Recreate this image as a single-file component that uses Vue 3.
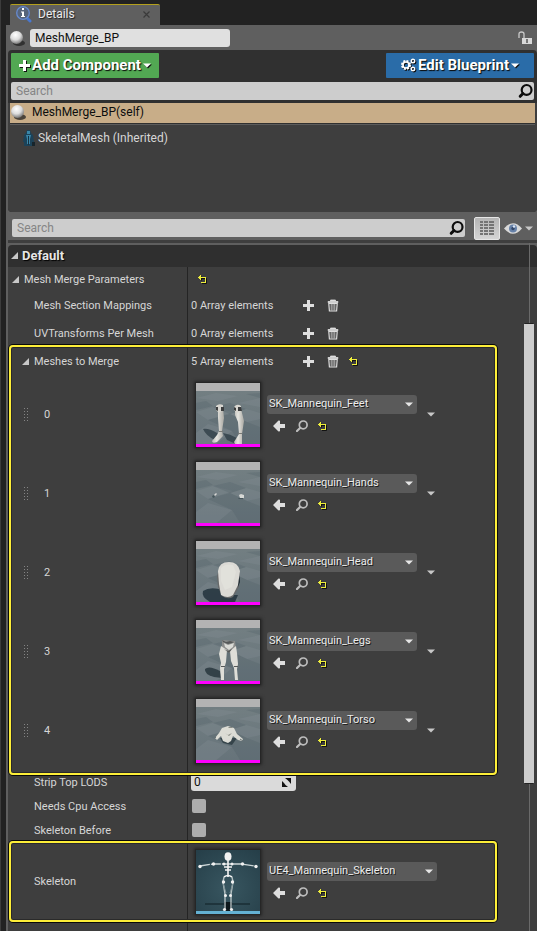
<script setup>
import { ref } from 'vue'

const meshes = ref([
  { kind: 'feet', name: 'SK_Mannequin_Feet' },
  { kind: 'hands', name: 'SK_Mannequin_Hands' },
  { kind: 'head', name: 'SK_Mannequin_Head' },
  { kind: 'legs', name: 'SK_Mannequin_Legs' },
  { kind: 'torso', name: 'SK_Mannequin_Torso' }
])
const arrays = ['Mesh Section Mappings', 'UVTransforms Per Mesh']
const flags = [
  { id: 'cpu', label: 'Needs Cpu Access' },
  { id: 'before', label: 'Skeleton Before' }
]
const blueprintName = ref('MeshMerge_BP')
const stripLods = ref('0')
const dots = [0, 3, 6, 9, 12]
</script>

<template>
  <svg class="defs" width="0" height="0" aria-hidden="true">
    <defs>
      <radialGradient id="ball" cx=".42" cy=".3" r=".7">
        <stop offset="0" stop-color="#fff" />
        <stop offset=".55" stop-color="#dcdcdc" />
        <stop offset="1" stop-color="#777" />
      </radialGradient>
      <linearGradient id="floor" x1="0" y1="0" x2="0" y2="1">
        <stop offset="0" stop-color="#748083" />
        <stop offset="1" stop-color="#66737a" />
      </linearGradient>
      <linearGradient id="skin" x1="0" y1="0" x2="1" y2="0">
        <stop offset="0" stop-color="#b9b8b3" />
        <stop offset=".4" stop-color="#e6e5e0" />
        <stop offset="1" stop-color="#aaa9a3" />
      </linearGradient>
      <radialGradient id="teal" cx=".5" cy=".6" r=".75">
        <stop offset="0" stop-color="#385660" />
        <stop offset="1" stop-color="#263f49" />
      </radialGradient>
    </defs>
    <symbol id="i-ball" viewBox="0 0 16 16">
      <ellipse cx="10" cy="13" rx="6" ry="3" fill="#222" opacity=".75" />
      <circle cx="7.5" cy="7.5" r="6.5" fill="url(#ball)" />
    </symbol>
    <symbol id="i-plus" viewBox="0 0 11 11">
      <path d="M4 0h3v4h4v3H7v4H4V7H0V4h4z" fill="#dedede" />
    </symbol>
    <symbol id="i-trash" viewBox="0 0 12 13">
      <path d="M3.5 2V1h5v1M1 2.5h10v1H1z" fill="#dedede" stroke="#dedede" stroke-width=".8" />
      <path d="M1.8 4.5h8.4L9.6 12H2.4z" fill="none" stroke="#dedede" stroke-width="1.2" />
      <path d="M4.2 5v6.5M6 5v6.5M7.8 5v6.5" stroke="#d0d0d0" stroke-width=".9" />
    </symbol>
    <symbol id="i-reset" viewBox="0 0 9 9">
      <path d="M3.5 1.500v4M1 3.500h7.500v5H4" fill="none" stroke="#111" />
      <path d="M2 0h1v2h5v6H3V7h4V3H3v2H2V4H1V3H0V2h1V1h1z" fill="#eeee3c" shape-rendering="crispEdges" />
    </symbol>
    <symbol id="i-back" viewBox="0 0 13 12">
      <path d="M0 6 5.5.5 7 .8V4h5v4H7v3.2l-1.5.3z" fill="#dedede" />
    </symbol>
    <symbol id="i-find" viewBox="0 0 12 12">
      <circle cx="7.2" cy="4.9" r="3.9" fill="none" stroke="#bdbdbd" stroke-width="1.7" />
      <path d="M4.3 7.8 1 11" stroke="#bdbdbd" stroke-width="2.2" stroke-linecap="round" />
    </symbol>
    <symbol id="i-search" viewBox="0 0 16 16">
      <circle cx="8.600" cy="6.900" r="4.900" fill="none" stroke="#0c0c0c" stroke-width="2.200" />
      <path d="M5 10.500 2.200 13.300" stroke="#0c0c0c" stroke-width="3" stroke-linecap="round" />
    </symbol>
    <symbol id="i-caret" viewBox="0 0 8 5"><path d="M0 .5h8L4 4.5z" fill="currentColor" /></symbol>
    <symbol id="i-open" viewBox="0 0 7 7"><path d="M7 0v7H0z" fill="#c8c8c8" /></symbol>
    <symbol id="i-grip" viewBox="0 0 5 14">
      <g v-for="y in dots" :key="y" fill="#858585">
        <rect x="0" :y="y" width="1" height="1" /><rect x="3" :y="y" width="1" height="1" />
      </g>
    </symbol>
    <symbol id="i-scene" viewBox="0 0 64 64">
      <rect width="64" height="64" fill="url(#floor)" />
      <g fill="#849095" opacity=".3">
        <path d="M0 15 20 10 42 13 22 18zM42 20 64 15v9zM0 29 17 24 37 29 12 37zM34 31 50 26 64 30v6L51 39zM12 41 36 48 17 64H0V50z" />
      </g>
      <g fill="#4b5b62" opacity=".25">
        <path d="M17 24 34 20 50 26 34 31zM12 37 34 31 51 39 36 48zM36 48 51 39 64 44v20H46zM0 20l10-2 7 5-17 4zM50 11l14-1v5z" />
      </g>
      <rect width="64" height="8" fill="#b3b3b3" />
    </symbol>
    <symbol id="i-feet" viewBox="0 0 64 64">
      <path d="M7 46q6-1 16 5l1 4-5 2q-9-4-12-11zM27 50q7 1 14 5l-1 6-9-4z" fill="#2c3b43" opacity=".75" />
      <path d="M22 25h5l1 10-2 13 1 5-6 6q-5 2-5-1l5-6 2-4-1-13z" fill="url(#skin)" />
      <path d="M39 26h6l3 12-2 13v10h-7l-1-2 5-8-1-12-3-7z" fill="url(#skin)" />
      <path d="M20 23q3-3 7-1v5l-4 3-3-3zM38 24q3-4 7-1v5l-4 2-3-3z" fill="#d8d6d0" />
      <path d="M20 24h2v4l-2-1zM25 24h3v4h-3zM38 24l2 1v3l-2-1zM42 24h3l1 4h-4z" fill="#3b3d3e" />
      <path d="M23 48h4v1h-4zM42 50h4v1h-4z" fill="#777975" />
    </symbol>
    <symbol id="i-hands" viewBox="0 0 64 64">
      <path d="m18 33 2-2 1 1-2 2zM43 33l2-1 3 1v3h-4z" fill="#d7d8d5" />
      <path d="m16 34 2-1 1 2-2 1zM43 36h4v1h-5z" fill="#45545a" />
    </symbol>
    <symbol id="i-head" viewBox="0 0 64 64">
      <path d="M7 50q7-5 20-1l4 12H14Q5 56 7 50zM27 54h15l-3 7H27z" fill="#22333d" opacity=".85" />
      <path d="M21 36q2-13 12-14 10 0 11 10l-1 14-6 10q-5 3-11-1l-4-9z" fill="#67696a" />
      <path d="M41 31q3 3 3 10l-2 5z" fill="#222d34" />
      <path d="M22 30q1-9 11-9 9 0 11 9l-2 14-5 10q-5 4-12 0l-2-11z" fill="#dbdad5" />
      <path d="M25 27q4-5 12-3l3 7-4 15-7 3-4-9z" fill="#e8e7e2" opacity=".5" />
    </symbol>
    <symbol id="i-legs" viewBox="0 0 64 64">
      <path d="M9 49q4-4 15 2l2 7-8-1q-10-3-9-8z" fill="#243239" opacity=".8" />
      <path d="m26 20 13 1 1 8-7 4-7-4z" fill="#8d8e8c" />
      <path d="m25 26 6 4-1 12-2 7v11h-3l-1-12 1-5-2-9zM40 26l-6 5 1 10 3 7 1 12h3l-1-11 1-5-1-11z" fill="#dfded8" />
      <path d="m28 23 4 2 6-2-1 4-4 3-4-3z" fill="#dadbd6" />
      <path d="m26 20 4 2 4-1 4 1-2 1-4 1-5-2zM28 29l4 2 4-2-3 4zM25 46h4v1h-4zM38 46h4v1h-4z" fill="#555858" />
    </symbol>
    <symbol id="i-torso" viewBox="0 0 64 64">
      <path d="M24 39h17l-5 7-9-2z" fill="#2b3a40" opacity=".8" />
      <path d="m26 29 6-2 6 2 3 6 6 5-1 2-4-1-5-4-2 5-3 2-5-2-2-5-4 4-2-2 4-5z" fill="#dcdcd5" />
      <path d="M32 28h4l1 1-4 0zM29 34l3 2 4-2-3 3z" fill="#888b84" />
      <path d="m20 38-2 2M44 40l3 2" stroke="#6a7375" />
    </symbol>
    <symbol id="i-skeleton" viewBox="0 0 64 64">
      <rect width="64" height="64" fill="url(#teal)" />
      <path d="M9 54h45" stroke="#1b2f36" stroke-width="2" opacity=".8" />
      <path d="M28 52h8v9h-8z" fill="#0d171b" />
      <path d="M4 16 17 14h11l4 0 4 0h10l13 2" fill="none" stroke="#cdd6d7" stroke-width="1.300" stroke-dasharray="10 1" />
      <path d="M32 10v17M28 17h8M29 20h6M28 27q4-3 8 0" fill="none" stroke="#f4f4f4" stroke-width="1.600" />
      <path d="m28 27-1 5 2 12v15M36 27l1 5-2 12v15" fill="none" stroke="#b4c1c2" stroke-width="1.400" />
      <path d="m27 33 3 10M37 33l-3 10" stroke="#7f9297" />
      <g fill="#f1f1f1">
        <ellipse cx="32" cy="6.500" rx="3.500" ry="4.300" />
        <circle cx="4" cy="16.500" r="1.700" /><circle cx="60" cy="16.500" r="1.700" />
        <circle cx="17.500" cy="14" r="1.700" /><circle cx="46.500" cy="14" r="1.700" />
        <circle cx="28" cy="14" r="1.500" /><circle cx="36" cy="14" r="1.500" />
        <circle cx="27.500" cy="32" r="1.700" /><circle cx="36.500" cy="32" r="1.700" />
        <circle cx="29.500" cy="45.500" r="1.500" /><circle cx="34.500" cy="45.500" r="1.500" />
        <circle cx="28.500" cy="59.500" r="1.600" /><circle cx="35.500" cy="59.500" r="1.600" />
      </g>
    </symbol>
  </svg>

  <div class="window">
    <div class="tabs">
      <div class="tab">
        <svg width="18" height="18" viewBox="0 0 18 18" aria-hidden="true">
          <path d="m11 12 4 4" stroke="#4978d0" stroke-width="3" stroke-linecap="round" />
          <circle cx="8" cy="8" r="6.300" fill="#56647a" stroke="#668ad0" stroke-width="1.300" />
          <path d="M7 3h2v2H7zM6 6.500h3V11h1v1H6v-1h1V7.500H6z" fill="#fff" />
        </svg>
        <span class="tab-title">Details</span>
        <button class="plain close" aria-label="Close tab">
          <svg width="7" height="7" viewBox="0 0 7 7"><path d="m.5.5 6 6M6.500.5l-6 6" stroke="#3a3a3a" stroke-width="1.200" /></svg>
        </button>
      </div>
    </div>

    <main class="frame">
      <header class="name-bar">
        <svg width="16" height="16" aria-hidden="true"><use href="#i-ball" /></svg>
        <input v-model="blueprintName" class="name" aria-label="Blueprint name" />
        <button class="plain lock" aria-label="Lock">
          <svg width="14" height="14" viewBox="0 0 14 14">
            <path d="M1 7V3q0-2 2.500-2T6 3v4" fill="none" stroke="#c9c9c9" stroke-width="1.300" />
            <path d="M4 7h10v6H4z" fill="#d8d8d8" /><path d="M8 8h2v4H8z" fill="#777" />
          </svg>
        </button>
      </header>

      <section class="components">
        <div class="actions">
          <button class="big green">
            <svg width="11" height="11" viewBox="0 0 11 11" class="drop"><path d="M4 0h3v4h4v3H7v4H4V7H0V4h4z" fill="#fff" /></svg>
            <span>Add Component</span>
            <svg width="8" height="5" class="drop"><use href="#i-caret" /></svg>
          </button>
          <button class="big blue">
            <svg width="15" height="14" viewBox="0 0 15 14" class="drop">
              <circle cx="5" cy="7" r="4" fill="none" stroke="#fff" stroke-width="2" stroke-dasharray="2 1.140" />
              <circle cx="5" cy="7" r="3" fill="none" stroke="#fff" stroke-width="1.600" />
              <circle cx="12" cy="3" r="1.800" fill="none" stroke="#fff" stroke-width="1.400" />
              <circle cx="12" cy="11" r="1.800" fill="none" stroke="#fff" stroke-width="1.400" />
            </svg>
            <span>Edit Blueprint</span>
            <svg width="8" height="5" class="drop"><use href="#i-caret" /></svg>
          </button>
        </div>
        <div class="search">
          <input type="search" placeholder="Search" aria-label="Search components" />
          <svg width="16" height="16" aria-hidden="true"><use href="#i-search" /></svg>
        </div>
        <ul class="tree">
          <li class="node selected">
            <svg width="16" height="16" aria-hidden="true"><use href="#i-ball" /></svg>
            <span>MeshMerge_BP(self)</span>
          </li>
          <li class="node child">
            <svg width="12" height="16" viewBox="0 0 12 16" aria-hidden="true">
              <path d="M6 12h6v4H3z" fill="#17242b" />
              <path d="M4 0h3l1 3 2 2 1 7H9v4H1v-4H0l1-7 2-2z" fill="#1c4258" />
              <path d="M4 1h3v3H4zM3 5h5L7 9v5H4V9z" fill="#3986a8" /><path d="M5.500 6v9" stroke="#163242" />
            </svg>
            <span>SkeletalMesh (Inherited)</span>
          </li>
        </ul>
      </section>

      <div class="toolbar">
        <div class="search grow">
          <input type="search" placeholder="Search" aria-label="Search details" />
          <svg width="16" height="16" aria-hidden="true"><use href="#i-search" /></svg>
        </div>
        <button class="matrix" aria-label="Property matrix">
          <svg width="14" height="14" viewBox="0 0 14 14">
            <path v-for="y in [1, 4, 7, 10, 13]" :key="y" :d="`M0 ${y}h3M4 ${y}h4M9 ${y}h5`" stroke="#747474" stroke-width="2" />
          </svg>
        </button>
        <button class="plain view" aria-label="View options">
          <svg width="18" height="11" viewBox="0 0 18 11">
            <path d="M0 5.500Q9-5 18 5.500 9 16 0 5.500z" fill="#d9d9d9" />
            <circle cx="9" cy="5.500" r="4" fill="#6782a9" /><circle cx="9" cy="5.500" r="1.700" fill="#34486a" /><circle cx="10" cy="3.500" r="1.200" fill="#dbe6f5" />
          </svg>
          <svg width="8" height="5"><use href="#i-caret" /></svg>
        </button>
      </div>

      <section class="details">
        <h2 class="category">
          <svg width="7" height="7" aria-hidden="true"><use href="#i-open" /></svg>Default
        </h2>
        <div class="props">
          <div class="row group">
            <div class="label top"><svg width="7" height="7" aria-hidden="true"><use href="#i-open" /></svg>Mesh Merge Parameters</div>
            <div class="value"><button class="plain first-reset" aria-label="Reset"><svg width="9" height="9"><use href="#i-reset" /></svg></button></div>
          </div>
          <div v-for="a in arrays" :key="a" class="row array">
            <div class="label">{{ a }}</div>
            <div class="value">
              <span class="count">0 Array elements</span>
              <button class="plain" aria-label="Add element"><svg width="11" height="11"><use href="#i-plus" /></svg></button>
              <button class="plain trash" aria-label="Empty array"><svg width="12" height="13"><use href="#i-trash" /></svg></button>
            </div>
          </div>

          <div class="callout list">
            <div class="row array">
              <div class="label open"><svg width="7" height="7" aria-hidden="true"><use href="#i-open" /></svg>Meshes to Merge</div>
              <div class="value">
                <span class="count">5 Array elements</span>
                <button class="plain" aria-label="Add element"><svg width="11" height="11"><use href="#i-plus" /></svg></button>
                <button class="plain trash" aria-label="Empty array"><svg width="12" height="13"><use href="#i-trash" /></svg></button>
                <button class="plain array-reset" aria-label="Reset"><svg width="9" height="9"><use href="#i-reset" /></svg></button>
              </div>
            </div>
            <div v-for="(m, i) in meshes" :key="m.kind" class="row asset">
              <div class="label item">
                <svg width="5" height="14" aria-hidden="true"><use href="#i-grip" /></svg>
                <label :for="`mesh-${i}`">{{ i }}</label>
              </div>
              <div class="value">
                <div class="thumb">
                  <svg width="64" height="64" aria-hidden="true"><use href="#i-scene" /><use :href="`#i-${m.kind}`" /></svg>
                </div>
                <div class="picker">
                  <div class="combo">
                    <select :id="`mesh-${i}`" v-model="m.name"><option>{{ m.name }}</option></select>
                    <svg width="8" height="5" aria-hidden="true"><use href="#i-caret" /></svg>
                  </div>
                  <div class="tools">
                    <button class="plain" aria-label="Use selected asset"><svg width="13" height="12"><use href="#i-back" /></svg></button>
                    <button class="plain" aria-label="Browse to asset"><svg width="12" height="12"><use href="#i-find" /></svg></button>
                    <button class="plain" aria-label="Reset"><svg width="9" height="9"><use href="#i-reset" /></svg></button>
                  </div>
                </div>
                <button class="plain more" aria-label="Element options"><svg width="8" height="5"><use href="#i-caret" /></svg></button>
              </div>
            </div>
          </div>

          <div class="row">
            <label class="label" for="lods">Strip Top LODS</label>
            <div class="value">
              <div class="spin">
                <input id="lods" v-model="stripLods" />
                <svg width="9" height="9" viewBox="0 0 9 9" aria-hidden="true"><path d="M3 0h6v6L7 3.500 5.500 2zM0 3l2 2 1.500 2L6 9H0z" fill="#111" /></svg>
              </div>
            </div>
          </div>
          <div v-for="f in flags" :key="f.id" class="row">
            <label class="label" :for="f.id">{{ f.label }}</label>
            <div class="value"><input :id="f.id" type="checkbox" class="check" /></div>
          </div>

          <div class="callout single">
            <div class="row asset">
              <label class="label" for="skeleton">Skeleton</label>
              <div class="value">
                <div class="thumb sky"><svg width="64" height="64" aria-hidden="true"><use href="#i-skeleton" /></svg></div>
                <div class="picker wide">
                  <div class="combo">
                    <select id="skeleton"><option>UE4_Mannequin_Skeleton</option></select>
                    <svg width="8" height="5" aria-hidden="true"><use href="#i-caret" /></svg>
                  </div>
                  <div class="tools">
                    <button class="plain" aria-label="Use selected asset"><svg width="13" height="12"><use href="#i-back" /></svg></button>
                    <button class="plain" aria-label="Browse to asset"><svg width="12" height="12"><use href="#i-find" /></svg></button>
                    <button class="plain" aria-label="Reset"><svg width="9" height="9"><use href="#i-reset" /></svg></button>
                  </div>
                </div>
              </div>
            </div>
          </div>
        </div>
        <div class="scroll"><div class="grip"></div></div>
      </section>
    </main>
  </div>
</template>

<style>
body { background: #222; }
</style>

<style scoped>
* { box-sizing: border-box; }
svg { display: block; flex: none; }
.defs { position: absolute; }
button, input, select { font: inherit; color: inherit; margin: 0; border: 0; padding: 0; }
.plain { display: flex; align-items: center; background: none; color: #c8c8c8; }
.window {
  min-height: 100vh; display: flex; flex-direction: column;
  border-left: 1px solid #3c3c3c; padding-left: 5px;
  background: #222; color: #d6d6d6; font-family: Roboto, sans-serif; font-size: 12px;
}
.tabs { padding: 4px 0 0 4px; display: flex; }
.tab {
  width: 150px; height: 21px; display: flex; align-items: center; padding: 0 10px 2px 5px;
  background: #5f5f5f; border-top: 1px solid #b4a01c; border-radius: 2px 2px 0 0;
}
.tab-title { margin-left: 5px; color: #ececec; text-shadow: 1px 1px 1px #222; }
.close { margin-left: auto; }
.frame { flex: 1; display: flex; flex-direction: column; background: #5f5f5f; padding-left: 2px; }
.name-bar { height: 25px; display: flex; align-items: center; gap: 5px; padding: 0 5px 0 1px; }
.name {
  width: 200px; height: 18px; padding: 0 5px; border-radius: 3px;
  background: #e0e0e0; color: #111; font-size: 12px;
}
.lock { margin-left: auto; }
.components { background: #303030; height: 162px; border-radius: 4px; padding-top: 3px; }
.actions { display: flex; justify-content: space-between; padding: 0 3px; }
.big {
  height: 25px; width: 148px; display: flex; align-items: center; justify-content: center; gap: 2px; padding-bottom: 1px;
  color: #fff; font-size: 15px; font-weight: 700; text-shadow: 1px 1px 1px #0a0a0a; border-radius: 1px; white-space: nowrap;
}
.green { background: #52a853; }
.blue { background: #2a6ca8; }
.drop { filter: drop-shadow(1px 1px 0 #111); }
.search {
  display: flex; align-items: center; height: 18px; margin: 4px 3px 3px; border-radius: 2px;
  background: #cdcdcd; color: #111;
}
.search input { flex: 1; min-width: 0; height: 18px; padding: 0 5px; background: none; font-size: 12px; appearance: none; }
.search input::placeholder { color: #858585; opacity: 1; }
.tree { list-style: none; margin: 0; padding: 0; height: 109px; background: #3e3e3e; border-radius: 0 0 4px 4px; }
.node { display: flex; align-items: center; }
.selected {
  height: 20px; margin: 0 2px; padding: 0 1px 3px 0; gap: 6px; background: #c8ad88; color: #0d0d0d;
  box-shadow: 0 1px 0 #303030, 0 2px 0 #5c5c5c;
}
.child { height: 24px; margin-top: 3px; padding-left: 15px; gap: 3px; }
.toolbar {
  height: 28px; display: flex; align-items: center; padding: 0 4px; gap: 4px;
}
.toolbar .search { margin: 4px 5px 0 0; }
.grow { flex: 1; }
.matrix {
  width: 26px; height: 23px; margin-top: 4px; display: flex; align-items: center; justify-content: center;
  background: linear-gradient(#b5b5b5, #d4d4d4); border: 1px solid #e6e6e6; border-radius: 2px;
}
.view { gap: 3px; margin-top: 4px; }
.details {
  flex: 1; position: relative; display: flex; flex-direction: column;
  border-top: 3px solid #3e3e3e; padding-top: 2px;
}
.category {
  height: 22px; margin: 0; padding: 0 3px 2px; display: flex; align-items: center; gap: 4px;
  background: #2f2f2f; color: #e6e6e6; font-size: 13px; font-weight: 700; text-shadow: 1px 1px 1px #000;
  border-radius: 4px 4px 0 0;
}
.props {
  flex: 1; background: linear-gradient(#242424, #242424) 179px 0 / 1px 100% no-repeat, #3e3e3e;
}
.row { display: flex; height: 24px; }
.array { height: 28px; }
.label { width: 180px; padding-left: 26px; display: flex; align-items: center; font-size: 11px; white-space: nowrap; }
.top { padding-left: 4px; gap: 5px; }
.value { flex: 1; display: flex; align-items: center; padding-left: 3px; font-size: 11px; }
.count { width: 112px; }
.trash { margin-left: 13px; }
.array-reset { margin-left: 10px; }
.first-reset { margin-left: 7px; }
.callout {
  position: relative; z-index: 1; margin-right: 40px; margin-left: 1px;
  border: 2px solid #fdee38; border-radius: 4px; box-shadow: 0 0 0 1px #0a0a0a, inset 0 0 0 1px #2a2a2a;
}
.callout .label { width: 177px; padding-left: 23px; }
.list { margin-top: -2px; margin-bottom: -5px; padding-bottom: 3px; }
.single { margin-top: -1px; }
.callout .open { padding-left: 11px; gap: 5px; }
.callout .item { padding-left: 13px; gap: 15px; }
.asset { height: 79px; }
.single .asset { height: 77px; }
.asset .value { padding-left: 8px; }
.thumb { position: relative; box-shadow: 0 0 0 1px #262626, 0 0 3px 2px #262626; }
.thumb::after { content: ""; position: absolute; left: 0; right: 0; bottom: 0; height: 3px; background: #f0f; }
.sky::after { background: #64b1d3; }
.picker { width: 150px; margin-left: 7px; padding-bottom: 2px; }
.wide { width: 170px; }
.combo { position: relative; }
.combo select {
  display: block; width: 100%; height: 19px; padding: 0 20px 2px 2px; appearance: none; border-radius: 3px;
  background: #5a5a5a; color: #ececec; font-size: 11px; text-shadow: 1px 1px 0 #1c1c1c;
}
.combo svg { position: absolute; right: 4px; top: 7px; pointer-events: none; color: #e6e6e6; }
.tools { display: flex; align-items: center; gap: 10px; height: 12px; margin: 6px 0 0 6px; }
.more { margin-left: 10px; }
.spin {
  width: 105px; height: 18px; display: flex; align-items: center; padding: 0 5px 0 3px;
  background: #dadada; color: #111; border-radius: 3px;
}
.spin input { flex: 1; min-width: 0; background: none; font-size: 12px; }
.check { appearance: none; width: 14px; height: 14px; margin-left: 1px; background: #adadad; border-radius: 2px; }
.scroll {
  position: absolute; z-index: 2; top: 0; bottom: 0; right: 3px; width: 10px; display: flex; padding: 80px 0 147px;
  background: linear-gradient(#6a6a6a, #6a6a6a) 5px 0 / 1px 100% no-repeat;
}
.grip { flex: 1; background: #cdcdcd; border: 1px solid #222; border-width: 1px 0; border-radius: 1px; }
</style>
